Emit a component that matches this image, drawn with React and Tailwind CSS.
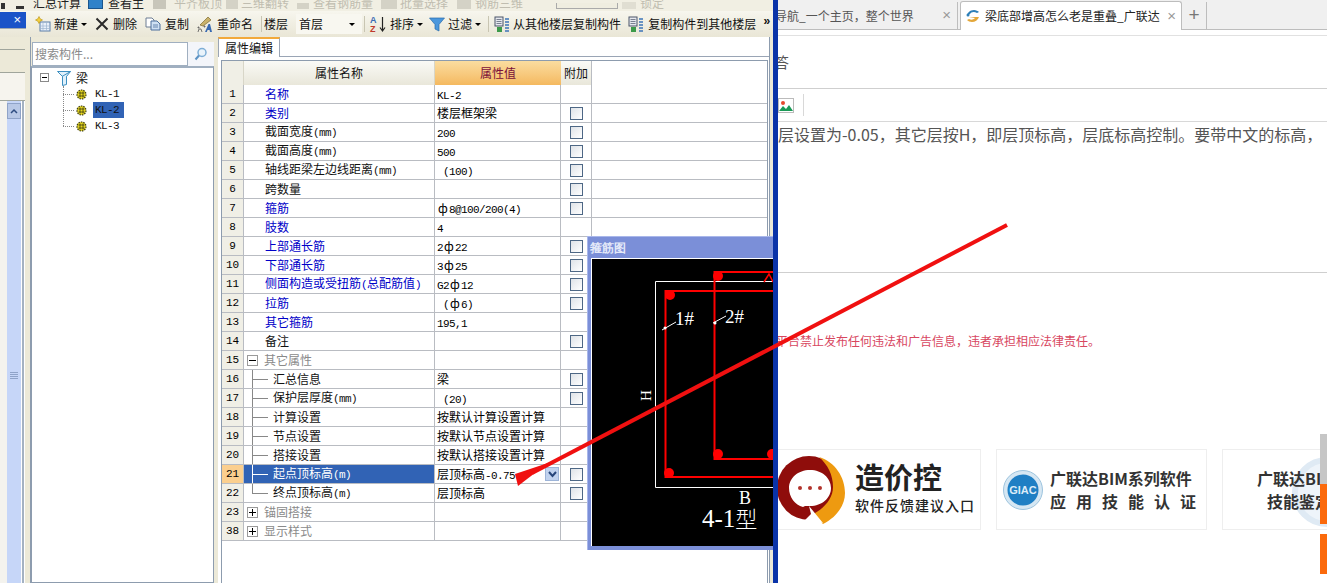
import React from "react";

const cjk = "font-['Noto_Sans_CJK_SC',sans-serif]";

// ascii runs get a half-width mono face, the rest stays in the CJK face
function Mixed({ text }) {
  const parts = text.match(/[\x00-\x7f]+|ф|[^\x00-\x7fф]+/g) || [];
  return parts.map((p, i) =>
    p === "ф" ? (
      <span key={i} className="inline-block w-[12px] text-center">ф</span>
    ) : /^[\x00-\x7f]/.test(p) ? (
      <span key={i} className="font-['Liberation_Mono',monospace] text-[11px] tracking-[-0.6px] whitespace-pre">{p}</span>
    ) : (
      <span key={i}>{p}</span>
    )
  );
}

const rows = [
  { n: 1, name: "名称", val: "KL-2", blue: true, noCheck: true },
  { n: 2, name: "类别", val: "楼层框架梁", blue: true },
  { n: 3, name: "截面宽度(mm)", val: "200" },
  { n: 4, name: "截面高度(mm)", val: "500" },
  { n: 5, name: "轴线距梁左边线距离(mm)", val: " (100)" },
  { n: 6, name: "跨数量", val: "" },
  { n: 7, name: "箍筋", val: "ф8@100/200(4)", blue: true },
  { n: 8, name: "肢数", val: "4", blue: true, noCheck: true },
  { n: 9, name: "上部通长筋", val: "2ф22", blue: true },
  { n: 10, name: "下部通长筋", val: "3ф25", blue: true },
  { n: 11, name: "侧面构造或受扭筋(总配筋值)", val: "G2ф12", blue: true },
  { n: 12, name: "拉筋", val: " (ф6)", blue: true },
  { n: 13, name: "其它箍筋", val: "195,1", blue: true, noCheck: true },
  { n: 14, name: "备注", val: "" },
  { n: 15, name: "其它属性", val: "", group: "-", noCheck: true },
  { n: 16, name: "汇总信息", val: "梁", child: true },
  { n: 17, name: "保护层厚度(mm)", val: " (20)", child: true },
  { n: 18, name: "计算设置", val: "按默认计算设置计算", child: true, noCheck: true },
  { n: 19, name: "节点设置", val: "按默认节点设置计算", child: true, noCheck: true },
  { n: 20, name: "搭接设置", val: "按默认搭接设置计算", child: true, noCheck: true },
  { n: 21, name: "起点顶标高(m)", val: "层顶标高-0.75", child: true, selected: true },
  { n: 22, name: "终点顶标高(m)", val: "层顶标高", child: true, last: true },
  { n: 23, name: "锚固搭接", val: "", group: "+", noCheck: true },
  { n: 38, name: "显示样式", val: "", group: "+", noCheck: true },
];

function Caret({ className = "" }) {
  return <span className={`shrink-0 w-0 h-0 border-x-[3px] border-x-transparent border-t-[3px] border-t-black ${className}`} />;
}

function NewIcon() {
  return (
    <svg width="16" height="16" viewBox="0 0 16 16">
      <rect x="5" y="6" width="10" height="9" fill="#e8f0fa" stroke="#5d7fa8" />
      <path d="M5 10h10M5 12.5h10M8 6v9M11.5 6v9" stroke="#9db4cf" strokeWidth="0.7" />
      <path d="M4 0.5l1.2 2.3 2.3 1.2-2.3 1.2-1.2 2.3-1.2-2.3L0.500 4l2.300-1.200z" fill="#f4d03f" stroke="#b58f10" strokeWidth="0.6" />
    </svg>
  );
}

function DeleteIcon() {
  return (
    <svg width="14" height="14" viewBox="0 0 14 14">
      <path d="M1.500 1.500l11 11M12.500 1.500l-11 11" stroke="#2a2a2a" strokeWidth="2" />
    </svg>
  );
}

function CopyIcon() {
  return (
    <svg width="16" height="14" viewBox="0 0 16 14">
      <path d="M1 1h6l2 2v7H1z" fill="#fff" stroke="#6c7d93" />
      <path d="M6 4h6l3 3v6H6z" fill="#cfe0f3" stroke="#4d6f9c" />
      <path d="M8 8h5M8 10h5" stroke="#4d6f9c" strokeWidth="0.8" />
    </svg>
  );
}

function RenameIcon() {
  return (
    <svg width="16" height="17" viewBox="0 0 16 17">
      <path d="M3 9l8-8 3 3-8 6z" fill="#c9b26b" stroke="#7d6a2e" strokeWidth="0.7" />
      <path d="M1 16l1-3h2l1 3M7 10h1v1H7zM1 11h1v1H1z" fill="none" stroke="#555" strokeWidth="0.8" />
      <path d="M8 16l3.500-8h1.500l2 8h-2l-0.400-2h-2l-0.800 2z" fill="#3769b1" />
    </svg>
  );
}

function SortIcon() {
  return (
    <svg width="18" height="18" viewBox="0 0 18 18">
      <text x="1" y="8" fontSize="9" fontFamily="Liberation Sans" fontWeight="700" fill="#3b6db5">A</text>
      <text x="1" y="17" fontSize="9" fontFamily="Liberation Sans" fontWeight="700" fill="#c0392b">Z</text>
      <path d="M13.500 2v13M11 12.500l2.500 3.500 2.500-3.500" fill="none" stroke="#222" strokeWidth="1.200" />
    </svg>
  );
}

function FilterIcon() {
  return (
    <svg width="16" height="15" viewBox="0 0 16 15">
      <path d="M0.500 1h15l-5.500 6.500V14l-4-2V7.500z" fill="#4a97dd" stroke="#2a6cab" strokeWidth="0.700" />
    </svg>
  );
}

function FloorCopyIcon() {
  return (
    <svg width="16" height="17" viewBox="0 0 16 17">
      <rect x="1" y="1" width="8" height="9" fill="#e6e8ee" stroke="#4b5568" />
      <path d="M2.500 3.500h5M2.500 5.500h5M2.500 7.500h5" stroke="#4b5568" strokeWidth="0.700" />
      <path d="M11 3h4M11 6h4M11 9h4M11 12h4M11 15h4" stroke="#3d74b8" strokeWidth="1.400" />
      <path d="M3 11h5v5H3z" fill="#3c9a4a" />
    </svg>
  );
}

function TreeBeamIcon() {
  return (
    <svg width="14" height="16" viewBox="0 0 14 16">
      <path d="M0.500 1.500h13l-4 5v8l-4 1v-9z" fill="#dff0fb" stroke="#3d8fc0" />
      <path d="M5 6.500l8.500-5M9.500 6.500V14" stroke="#3d8fc0" />
    </svg>
  );
}

function GearDot() {
  return (
    <svg width="11" height="11" viewBox="0 0 11 11">
      <circle cx="5.500" cy="5.500" r="4.500" fill="#e8d820" stroke="#3a3a10" strokeWidth="1.200" strokeDasharray="1.500 1" />
      <path d="M2.500 4h6M2.500 7h6M4 2.500v6M7 2.500v6" stroke="#3a3a10" strokeWidth="0.800" />
    </svg>
  );
}

function TopMenu() {
  const off = "text-[#c0bdb0]";
  return (
    <div className="h-[11px] bg-[#f1efe3] overflow-hidden text-[12px] whitespace-nowrap">
      <div className="flex items-end h-[9px] leading-none text-[#222]">
        <span className="ml-[1px] w-[4px] h-[6px] bg-[#333] shrink-0" />
        <span className="ml-[11px] w-[8px] h-[3px] bg-[#333] shrink-0" />
        <span className="ml-[9px]">汇总计算</span>
        <span className="ml-[7px] w-[15px] h-[10px] bg-[#2f82c9] border border-[#1a558d] shrink-0" />
        <span className="ml-[5px]">查看主</span>
        <span className="ml-[9px] w-[13px] h-[9px] bg-[#c8c6ba] shrink-0" />
        <span className={`ml-[8px] ${off}`}>平齐板顶</span>
        <span className="ml-[4px] w-[12px] h-[9px] bg-[#d4d2c6] shrink-0" />
        <span className={`ml-[3px] ${off}`}>三维翻转</span>
        <span className="ml-[8px] w-[12px] h-[6px] bg-[#d4d2c6] shrink-0" />
        <span className={`ml-[4px] ${off}`}>查看钢筋量</span>
        <span className="ml-[8px] w-[16px] h-[9px] bg-[#d4d2c6] shrink-0" />
        <span className={`ml-[3px] ${off}`}>批量选择</span>
        <span className="ml-[9px] w-[14px] h-[9px] bg-[#d4d2c6] shrink-0" />
        <span className={`ml-[4px] ${off}`}>钢筋三维</span>
        <span className="ml-[33px] w-[62px] h-[6px] border border-[#aaa] border-t-0 bg-[#efede0] shrink-0" />
        <span className="ml-[4px] w-[14px] h-[7px] bg-[#e0ded2] shrink-0" />
        <span className={`ml-[4px] ${off}`}>锁定</span>
      </div>
    </div>
  );
}

function Toolbar() {
  return (
    <div className={`h-[26px] flex items-center text-[12px] text-[#111] whitespace-nowrap bg-gradient-to-b from-[#f7f6ee] to-[#e9e6d6] ${cjk}`}>
      <div className="w-[26px] h-full flex flex-col shrink-0">
        <div className="h-[16px] mt-[1px] bg-[#1a53c8] text-white text-[13px] flex items-center justify-end pr-[5px] font-['Liberation_Sans',sans-serif]">×</div>
        <div className="flex-1 border-t border-[#9fa7b0]" />
      </div>
      <div className="w-[9px] shrink-0" />
      <NewIcon />
      <span className="ml-[3px]">新建</span>
      <Caret className="ml-[3px]" />
      <span className="ml-[8px]"><DeleteIcon /></span>
      <span className="ml-[4px]">删除</span>
      <span className="ml-[8px]"><CopyIcon /></span>
      <span className="ml-[4px]">复制</span>
      <span className="ml-[8px]"><RenameIcon /></span>
      <span className="ml-[4px]">重命名</span>
      <span className="ml-[8px] w-px h-[16px] bg-[#c8c5b2]" />
      <span className="ml-[2px]">楼层</span>
      <div className="ml-[8px] w-[66px] h-[20px] bg-[#f8f7f0] flex items-center pl-[3px] pr-[7px] justify-between shrink-0">
        <span>首层</span>
        <Caret />
      </div>
      <span className="ml-[2px] w-px h-[16px] bg-[#c8c5b2]" />
      <span className="ml-[4px]"><SortIcon /></span>
      <span className="ml-[3px]">排序</span>
      <Caret className="ml-[3px]" />
      <span className="ml-[6px]"><FilterIcon /></span>
      <span className="ml-[3px]">过滤</span>
      <Caret className="ml-[3px]" />
      <span className="ml-[7px] w-px h-[16px] bg-[#c8c5b2]" />
      <span className="ml-[5px]"><FloorCopyIcon /></span>
      <span className="ml-[3px]">从其他楼层复制构件</span>
      <span className="ml-[7px]"><FloorCopyIcon /></span>
      <span className="ml-[4px]">复制构件到其他楼层</span>
      <span className="ml-[7px] font-['Liberation_Mono',monospace] font-bold -mt-[4px]">»</span>
    </div>
  );
}

function Tree() {
  return (
    <div className="flex-1 bg-white border-x border-b border-[#8d9cae] border-t-2 border-t-[#a0afc0] relative pl-[8px] pt-[1px] text-[12px] text-[#111]">
      <div className="flex items-center h-[17px]">
        <span className="w-[9px] h-[9px] border border-[#8a8a8a] flex items-center justify-center">
          <span className="w-[5px] h-px bg-black" />
        </span>
        <span className="ml-[8px]"><TreeBeamIcon /></span>
        <span className="ml-[5px]">梁</span>
      </div>
      {["KL-1", "KL-2", "KL-3"].map((k) => (
        <div key={k} className="flex items-center h-[16px] pl-[23px]">
          <span className="w-[11px] border-t border-dotted border-[#888]" />
          <span className="ml-[2px]"><GearDot /></span>
          <span className={`ml-[6px] px-[2px] h-[16px] leading-[16px] w-[31px] font-['Liberation_Mono',monospace] text-[11px] tracking-[-0.6px] ${k === "KL-2" ? "bg-[#3163b5]" : ""}`}>{k}</span>
        </div>
      ))}
      <div className="absolute left-[31px] top-[18px] h-[40px] border-l border-dotted border-[#888]" />
    </div>
  );
}

function Row({ r }) {
  const nameColor = r.selected ? "text-white" : r.blue ? "text-[#0000c8]" : r.group ? "text-[#8a8a8a]" : "text-[#111]";
  return (
    <div className="flex h-[19px] text-[12px] leading-[18px] border-b border-[#b9bcc2]">
      <div className={`w-[22px] text-center border-r border-[#b9bcc2] font-['Liberation_Mono',monospace] text-[11px] ${r.selected ? "bg-[#fbcf8e]" : "bg-[#f0efe6]"}`}>{r.n}</div>
      <div className={`w-[191px] border-r border-[#b9bcc2] flex items-center whitespace-nowrap ${r.selected ? "bg-[#3163b5]" : ""} ${nameColor}`}>
        {r.group ? (
          <>
            <span className="ml-[3px] w-[11px] h-[11px] border border-[#9a9a9a] flex items-center justify-center relative text-black">
              <span className="w-[7px] h-px bg-black" />
              {r.group === "+" && <span className="absolute w-px h-[7px] bg-black" />}
            </span>
            <span className="ml-[6px]">{r.name}</span>
          </>
        ) : r.child ? (
          <>
            <span className={`ml-[8px] w-[17px] h-full relative ${r.selected ? "text-white" : "text-[#888]"}`}>
              <span className={`absolute left-0 top-0 w-px bg-current ${r.last ? "h-[10px]" : "h-full"}`} />
              <span className="absolute left-0 top-[9px] w-[16px] h-px bg-current" />
            </span>
            <span className="ml-[4px]"><Mixed text={r.name} /></span>
          </>
        ) : (
          <span className="ml-[21px]"><Mixed text={r.name} /></span>
        )}
      </div>
      <div className="w-[126px] border-r border-[#b9bcc2] pl-[2px] relative whitespace-nowrap">
        <Mixed text={r.val} />
        {r.selected && (
          <span className="absolute right-[1px] top-[2px] w-[14px] h-[14px] bg-[#c1d2ee] border border-[#9db4d8] flex items-center justify-center">
            <svg width="9" height="7" viewBox="0 0 9 7"><path d="M1 1l3.500 4L8 1" fill="none" stroke="#27457a" strokeWidth="2" /></svg>
          </span>
        )}
      </div>
      <div className="w-[31px] border-r border-[#b9bcc2] flex items-center justify-center pl-[1px]">
        {!r.noCheck && <span className="w-[13px] h-[13px] border border-[#4d6785] bg-gradient-to-br from-[#dfe3e8] to-white" />}
      </div>
    </div>
  );
}

function PropertyTable() {
  return (
    <div className="flex-1 mt-[3px] ml-[3px] mr-[1px] border border-[#8d9cae] border-b-0 bg-white">
      <div className="flex h-[24px] text-[12px] leading-[23px] text-center">
        <div className="w-[22px] bg-[#f0efe6] border-r border-[#d8d6c8]" />
        <div className="w-[191px] bg-gradient-to-b from-[#fafaf6] to-[#e9e7da] border-r border-[#d8d6c8] text-[#111]">属性名称</div>
        <div className="w-[126px] bg-gradient-to-b from-[#fbdd9f] to-[#f4b95f] text-[#7a0f3a]">属性值</div>
        <div className="w-[31px] bg-gradient-to-b from-[#fafaf6] to-[#e9e7da] border-r border-[#b9bcc2] text-[#111]">附加</div>
      </div>
      {rows.map((r) => <Row key={r.n} r={r} />)}
    </div>
  );
}

// stirrup drawing shown in the floating window
function StirrupDiagram() {
  const dots = [[670, 295], [669, 473], [718, 276], [718, 454], [772, 454]];
  return (
    <svg className="block w-full h-full" viewBox="592 259 181 287">
      <rect x="592" y="259" width="181" height="287" fill="#000" />
      <path d="M780 281.500H655.500V487.500H780" fill="none" stroke="#fff" />
      <path d="M780 291H665.500V477H780M780 272H714.500V459H780" fill="none" stroke="#f00" strokeWidth="2" />
      <path d="M764 282l5-8 4 8" fill="none" stroke="#f00" strokeWidth="1.500" />
      {dots.map(([x, y]) => <circle key={`${x}-${y}`} cx={x} cy={y} r="5" fill="#f00" />)}
      <path d="M662 330l14-8M713 323l13-7" stroke="#fff" />
      <circle cx="665" cy="328" r="1.500" fill="#fff" />
      <circle cx="715" cy="323" r="1.500" fill="#fff" />
      <g fill="#fff" fontFamily="Liberation Serif" >
        <text x="675" y="325" fontSize="19">1#</text>
        <text x="725" y="323" fontSize="19">2#</text>
        <text x="739" y="504" fontSize="18">B</text>
        <text x="702" y="527" fontSize="25">4-1<tspan fontFamily="Noto Sans CJK SC" fontSize="22" fontWeight="300">型</tspan></text>
        <text transform="translate(651 401) rotate(-90)" fontSize="15">H</text>
      </g>
    </svg>
  );
}

function StirrupWindow() {
  return (
    <div className="absolute left-[587px] top-[236px] w-[186px] h-[314px] bg-[#7b8fd8] pl-[3px] pb-[4px] flex flex-col overflow-hidden border-l border-t border-[#a9b7ea]">
      <div className="h-[21px] text-[12px] leading-[21px] font-bold text-[#e4e9f8] -ml-[1px] shrink-0">箍筋图</div>
      <div className="flex-1 border-t border-l border-white min-h-0">
        <StirrupDiagram />
      </div>
    </div>
  );
}

function LeftWindow() {
  return (
    <div className={`w-[773px] h-full flex flex-col bg-[#ece9d8] overflow-hidden ${cjk}`}>
      <TopMenu />
      <Toolbar />
      <div className="flex-1 flex min-h-0">
        {/* docked nav strip */}
        <div className="w-[31px] flex shrink-0 border-r border-[#8d9cae]">
          <div className="w-[25px] h-full flex flex-col">
            <div className="h-[13px] border-b border-[#a0a59c] bg-[#ece9d8]" />
            <div className="h-[23px] border-b border-[#a0a59c] bg-[#ece9d8]" />
            <div className="h-[28px] border-b border-[#a0a59c] bg-[#f6f4ee]" />
            <div className="flex-1 flex bg-[#f4f3ee]">
              <div className="w-[7px]" />
              <div className="w-[14px] h-full pt-[2px] bg-[#c6d6f8] flex flex-col items-center">
                <div className="w-[14px] h-[16px] bg-[#b8c8e6] border border-[#8fa3c8] flex items-center justify-center">
                  <svg width="8" height="6" viewBox="0 0 8 6"><path d="M1 5l3-3 3 3" fill="none" stroke="#2e4c80" strokeWidth="1.500" /></svg>
                </div>
                <div className="mt-[253px] flex flex-col gap-px">
                  <span className="w-[8px] h-px bg-[#8fa3c8]" />
                  <span className="w-[8px] h-px bg-[#8fa3c8]" />
                  <span className="w-[8px] h-px bg-[#8fa3c8]" />
                  <span className="w-[8px] h-px bg-[#8fa3c8]" />
                </div>
              </div>
              <div className="w-[1px] bg-white" />
              <div className="w-[2px] bg-[#a4b2c2]" />
              <div className="w-[1px] bg-white" />
            </div>
          </div>
          <div className="flex-1 bg-[#ece9d8]" />
        </div>

        {/* component list */}
        <div className="w-[183px] shrink-0 flex flex-col pt-[5px]">
          <div className="h-[24px] flex items-stretch pl-[1px] bg-[#ece9d8]">
            <div className="w-[156px] bg-white border border-[#a0afc0] text-[12px] leading-[22px] pl-[2px] text-[#8a8a8a]">搜索构件...</div>
            <div className="flex-1 flex items-center justify-center bg-[#f3f5fa]">
              <svg width="14" height="14" viewBox="0 0 14 14"><circle cx="8" cy="5.500" r="4" fill="#e9f3fb" stroke="#7eaed6" strokeWidth="1.500" /><path d="M5 8.500L1.500 12.500" stroke="#5d93c4" strokeWidth="2" /></svg>
            </div>
          </div>
          <Tree />
        </div>

        <div className="w-[4px] shrink-0" />

        {/* property editor */}
        <div className="w-[552px] shrink-0 flex flex-col bg-white border-r border-[#8d9cae]">
          <div className="h-[20px] bg-white border-b border-[#9aa5b5] flex items-end">
            <div className="w-[62px] h-[20px] -mb-px bg-white border-x border-[#9aa5b5] border-t-2 border-t-[#f2a93b] text-[12px] leading-[17px] text-center text-[#111]">属性编辑</div>
          </div>
          <PropertyTable />
        </div>
      </div>
    </div>
  );
}

function ChatLogo() {
  return (
    <svg width="72" height="68" viewBox="0 0 72 68">
      <circle cx="34" cy="32" r="32" fill="#8f0d0b" />
      <path d="M44 1c16 5 26 20 26 36 0 12-8 24-22 31L38 58c12-6 20-16 20-27 0-12-5-22-14-30z" fill="#ee9a10" />
      <path d="M14 32c0-10 9-18 21-18s21 8 21 18-9 18-21 18H30l-2 1c-8-2-14-10-14-19z" fill="#fff" />
      <path d="M34 50l14 17-18-3 6-6z" fill="#fff" />
      <circle cx="25" cy="32" r="2" fill="#b2332c" />
      <circle cx="35" cy="32" r="2" fill="#b2332c" />
      <circle cx="45" cy="32" r="2" fill="#b2332c" />
    </svg>
  );
}

function GiacSeal() {
  return (
    <svg width="40" height="40" viewBox="0 0 40 40">
      <circle cx="20" cy="20" r="19.500" fill="#d6e7f3" stroke="#9cc3dd" />
      <circle cx="20" cy="20" r="15.500" fill="#1f7fc4" />
      <text x="20" y="24" textAnchor="middle" fontSize="11" fontWeight="700" fontFamily="Liberation Sans Narrow, Liberation Sans" fill="#dcecf8">GIAC</text>
    </svg>
  );
}

function RightWindow() {
  return (
    <div className={`flex-1 min-w-0 h-full bg-white relative overflow-hidden ${cjk}`}>
      <div className="h-[36px] border-b border-[#e1e1e1] bg-white">
        <div className="h-[30px] bg-[#f0f0f0] border-b border-[#bdbdbd] flex items-end text-[12px] whitespace-nowrap">
          <div className="w-[180px] h-[27px] border-r border-[#bdbdbd] flex items-center text-[#555] relative">
            <span className="-ml-[3px]">导航_一个主页，整个世界</span>
            <span className="absolute right-[6px] text-[#999] text-[15px] font-['Liberation_Sans',sans-serif]">×</span>
          </div>
          <div className="ml-[2px] w-[222px] h-[29px] -mb-px bg-white border border-b-0 border-[#bdbdbd] rounded-t-[3px] flex items-center relative text-[#222]">
            <svg className="ml-[4px] shrink-0" width="16" height="14" viewBox="0 0 16 14">
              <path d="M2 7c0-3 3-6 7-6 2 0 4 1 5 2l-2 1c-3-2-6-1-7 1z" fill="#2d7fb8" />
              <path d="M4 8h10c-1 3-4 5-7 5-2 0-4-1-5-2l2-1c2 1 4 1 6-1z" fill="#e3a73a" />
              <circle cx="3" cy="6" r="1.500" fill="#2d7fb8" />
            </svg>
            <span className="ml-[4px]">梁底部增高怎么老是重叠_广联达</span>
            <span className="absolute right-[5px] text-[#999] text-[15px] font-['Liberation_Sans',sans-serif]">×</span>
          </div>
          <div className="w-[25px] h-[27px] border-r border-[#bdbdbd] flex items-center justify-center text-[#777] text-[19px] font-['Liberation_Sans',sans-serif]">+</div>
        </div>
      </div>

      <div className="h-[53px] pt-[16px] border-b border-[#cfcfcf] text-[15px] text-[#555] leading-[20px]">
        <span className="-ml-[4px] inline-block">答</span>
      </div>

      <div className="h-[33px] border-b border-[#d8d8d8] flex items-center">
        <svg width="16" height="15" viewBox="0 0 16 15">
          <rect x="0.500" y="0.500" width="15" height="14" fill="#fff" stroke="#bbb" />
          <circle cx="5" cy="5" r="2" fill="#e5482d" />
          <path d="M1 13l4-5 3 3 3-4 4 6z" fill="#1a9a57" />
        </svg>
        <span className="ml-[9px] w-px h-[22px] bg-[#d8d8d8]" />
      </div>

      <div className="h-[151px] border-b border-[#cfcfcf] pt-[2px] text-[16px] leading-[20px] text-[#555] whitespace-nowrap">
        层设置为-0.05，其它层按H，即层顶标高，层底标高控制。要带中文的标高，
      </div>

      <div className="pt-[59px] text-[12px] leading-[18px] text-[#d8475f] whitespace-nowrap">
        <span className="-ml-[2px] inline-block">平台禁止发布任何违法和广告信息，违者承担相应法律责任。</span>
      </div>

      <div className="mt-[99px] flex gap-[15px] -ml-[8px] h-[81px] whitespace-nowrap">
        <div className="w-[211px] shrink-0 border border-[#eeeeee] flex items-center pl-[4px]">
          <ChatLogo />
          <div className="ml-[8px] text-[#222] -mt-[1px]">
            <div className="text-[29px] font-bold leading-[32px]">造价控</div>
            <div className="text-[14px] font-medium leading-[26px] tracking-[1px]">软件反馈建议入口</div>
          </div>
        </div>
        <div className="w-[211px] shrink-0 border border-[#eeeeee] flex items-center pl-[6px]">
          <GiacSeal />
          <div className="ml-[7px] text-[#333] font-bold text-[16px] leading-[23px]">
            <div>广联达BIM系列软件</div>
            <div className="tracking-[10px]">应用技能认证</div>
          </div>
        </div>
        <div className="w-[211px] shrink-0 border border-[#eeeeee] relative flex items-center pl-[34px]">
          <span className="absolute left-[69px] top-[7px] w-[70px] h-[70px] rounded-full border-[6px] border-[#dfeaf4] bg-[#eef4fa]" />
          <div className="relative text-[#333] font-bold text-[16px] leading-[23px]">
            <div>广联达BIM</div>
            <div className="pl-[10px]">技能鉴定</div>
          </div>
        </div>
      </div>

      {/* floating side buttons */}
      <div className="absolute right-0 top-[434px] w-[7px] h-[50px] bg-[#c6c6c6]" />
      <div className="absolute right-0 top-[484px] w-[7px] h-[40px] bg-[#fb6a0c]" />
      <div className="absolute right-0 top-[534px] w-[7px] h-[40px] bg-[#fb6a0c]" />
    </div>
  );
}

export default function App() {
  return (
    <div className="relative w-[1327px] h-[583px] flex overflow-hidden bg-white">
      <LeftWindow />
      <div className="w-[5px] h-full bg-[#0a33a8] shrink-0" />
      <RightWindow />
      <StirrupWindow />
      {/* annotation arrow drawn over both windows */}
      <svg className="absolute inset-0 pointer-events-none" width="1327" height="583" viewBox="0 0 1327 583">
        <path d="M1007 225L532 473" stroke="#f01010" strokeWidth="4" fill="none" />
        <path d="M515 474L548 463L518 486Z" fill="#f01010" />
      </svg>
    </div>
  );
}
